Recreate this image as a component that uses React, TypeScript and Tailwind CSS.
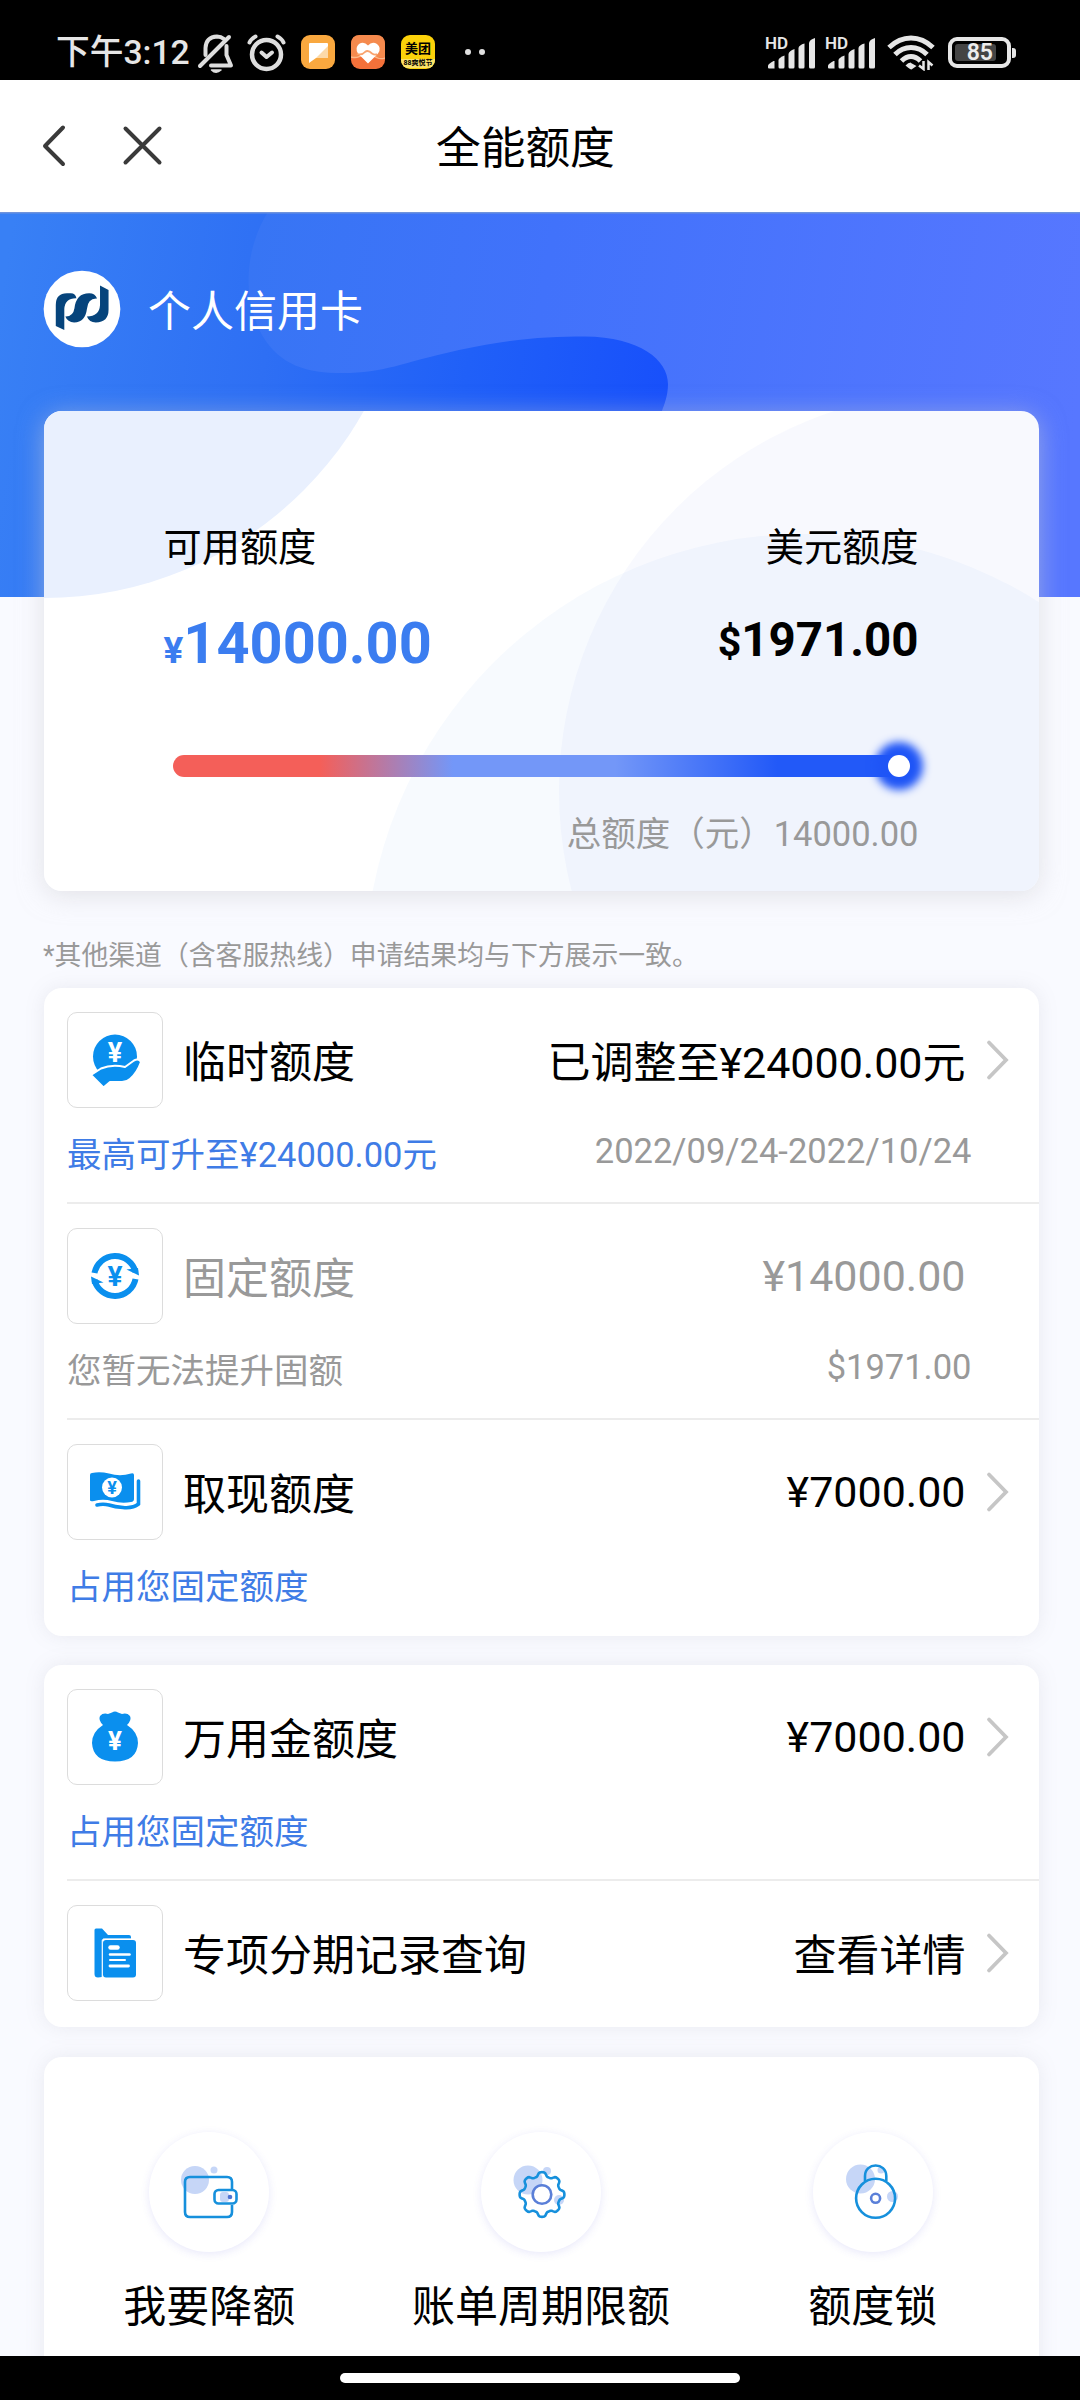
import type { ReactNode } from 'react';

const BLUE = '#0a8fee';

function Yuan({ x, y, size, fill }: { x: number; y: number; size: number; fill: string }) {
  return (
    <text x={x} y={y} textAnchor="middle" fontFamily="Roboto, sans-serif" fontWeight={700} fontSize={size} fill={fill}>
      ¥
    </text>
  );
}

/* ---------- status bar ---------- */

function SignalIcon() {
  return (
    <div className="relative h-[34px] w-[52px]">
      <span className="absolute left-0 top-0 text-[17px] font-semibold leading-[14px] text-[#e6e6e6]">HD</span>
      <svg className="absolute inset-0" width="52" height="34" viewBox="0 0 52 34" fill="#e6e6e6">
        <path d="M3 29.500 Q3 28 8.500 25 L9.500 25 V32.500 H4 Q3 32.500 3 31.500 Z" />
        <path d="M13.500 24 Q14 21.500 19.500 19.500 V31 Q19.500 32.500 18 32.500 H15 Q13.500 32.500 13.500 31 Z" />
        <path d="M23.500 18 Q24 15 29.500 13 V31 Q29.500 32.500 28 32.500 H25 Q23.500 32.500 23.500 31 Z" />
        <path d="M33.500 12 Q34 9 39.500 7.500 V31 Q39.500 32.500 38 32.500 H35 Q33.500 32.500 33.500 31 Z" />
        <path d="M44 7 Q44.500 3.500 50 2 V31 Q50 32.500 48.500 32.500 H45.500 Q44 32.500 44 31 Z" />
      </svg>
    </div>
  );
}

function StatusBar() {
  return (
    <div className="flex h-[80px] shrink-0 items-start bg-black pl-[56px] text-[#e6e6e6]">
      <span className="mt-[33px] w-[135px] whitespace-nowrap text-[33.700px] font-medium leading-[40px]">下午3:12</span>
      <svg className="ml-[6px] mt-[32px]" width="38" height="42" viewBox="0 0 38 42" fill="none" stroke="#dedede" strokeWidth="4" strokeLinecap="round" strokeLinejoin="round">
        <path d="M8.500 23 V16 Q9 5 20 4.500 Q24 4.500 27 7" />
        <path d="M29.500 14 V23 L34 33.500 H14" />
        <path d="M3 34 L32 5" />
        <path d="M14.500 38 Q19 42.500 24 38 Z" fill="#dedede" strokeWidth="1.500" />
      </svg>
      <svg className="ml-[11px] mt-[32px]" width="42" height="42" viewBox="0 0 42 42" fill="none" stroke="#dedede" strokeWidth="4" strokeLinecap="round">
        <circle cx="20.500" cy="22.500" r="14.500" strokeWidth="4.500" />
        <path d="M15.500 20.500 L20.500 25 L26 20.500" strokeLinejoin="round" />
        <path d="M3.500 10.500 Q5 7 9.500 4.500 M37.500 10.500 Q36 7 31.500 4.500" />
      </svg>
      <svg className="ml-[13px] mt-[35px]" width="34" height="34" viewBox="0 0 34 34">
        <rect width="34" height="34" rx="9" fill="#f9a83f" />
        <path d="M8 9 Q8 8 9 8 H26 Q27 8 27 9 V23 H15 L8 28 Z" fill="#fff" />
        <path d="M27 11 V23 H15 Z" fill="#fcd9a8" />
      </svg>
      <svg className="ml-[16px] mt-[35px]" width="34" height="34" viewBox="0 0 34 34">
        <rect width="34" height="34" rx="9" fill="#f4713a" />
        <path d="M0 22 H34 V9 Q34 0 25 0 H9 Q0 0 0 9 Z" fill="#f58a4e" />
        <path d="M0 22 Q7 24 12 19 Q17 15 22 20 Q27 25 34 23" stroke="#fbb98a" strokeWidth="1.500" fill="none" />
        <path d="M17 28.500 L7 18.500 Q3.500 13 8 9 Q13 6 17 10.500 Q21 6 26 9 Q31 13 27 18.500 Z" fill="#fff" />
        <path d="M6 19 Q11 20.500 14 17 Q17 14.500 21 18.500 Q24 20.500 26 19" stroke="#f9a36e" strokeWidth="1.800" fill="none" />
      </svg>
      <div className="ml-[16px] mt-[35px] flex h-[34px] w-[34px] flex-col items-center overflow-hidden rounded-[9px] bg-[#fcd20a] text-black">
        <span className="mt-[7px] text-[13px] font-bold leading-[14px]">美团</span>
        <span className="mt-[3px] w-full whitespace-nowrap bg-[#fbe36a] text-center text-[7px] font-bold leading-[9px]">88爽悦节</span>
      </div>
      <div className="ml-[30px] mt-[49px] flex gap-[8px]">
        <span className="h-[6px] w-[6px] rounded-full bg-[#e0e0e0]" />
        <span className="h-[6px] w-[6px] rounded-full bg-[#e0e0e0]" />
      </div>
      <div className="ml-[280px] mt-[36px] flex gap-[8px]">
        <SignalIcon />
        <SignalIcon />
      </div>
      <svg className="ml-[10px] mt-[35px]" width="48" height="36" viewBox="0 0 48 36" fill="none" stroke="#e6e6e6" strokeWidth="5">
        <path d="M2 12.500 Q12 3 24 3 Q36 3 46 12.500" />
        <path d="M8 19.500 Q15 12.500 24 12.500 Q33 12.500 40 19.500" />
        <path d="M14.500 26 Q19 21.500 24 21.500 Q29 21.500 33.500 26" />
        <path d="M24 28 L29.500 31 L24.500 34.500 Q23 34.500 18.500 30.500 Q21 27.500 24 27.500 Z" fill="#e6e6e6" stroke="none" />
        <path d="M36.500 26 V34 L32 30.500 M41.500 35 V27 L45.500 30.500" strokeWidth="2.500" />
      </svg>
      <div className="ml-[13px] mt-[37px] flex items-center">
        <div className="flex h-[31px] w-[63px] rounded-[9px] border-[4px] border-[#e6e6e6] p-[3px]">
          <div className="flex h-full w-[41px] items-center justify-end rounded-[3px] bg-[#444444] pr-[3px] text-[23px] font-semibold leading-none text-[#ececec]">85</div>
        </div>
        <span className="ml-[1px] h-[10px] w-[4px] rounded-r-[3px] bg-[#e6e6e6]" />
      </div>
    </div>
  );
}

function Header() {
  return (
    <div className="flex h-[132px] shrink-0 bg-white">
      <svg className="ml-[36px] mt-[40px]" width="36" height="52" viewBox="0 0 36 52" fill="none" stroke="#3a3a3a" strokeWidth="4" strokeLinecap="round" strokeLinejoin="round">
        <path d="M27 7.500 L9 26 L27 44" />
      </svg>
      <svg className="ml-[46px] mt-[40px]" width="48" height="52" viewBox="0 0 48 52" fill="none" stroke="#3a3a3a" strokeWidth="4" strokeLinecap="round">
        <path d="M7.500 8.500 L41.500 42.500 M41.500 8.500 L7.500 42.500" />
      </svg>
      <h1 className="ml-[270px] mt-[44px] text-[44.700px] font-normal leading-[50px] text-black">全能额度</h1>
    </div>
  );
}

/* ---------- hero ---------- */

function HeroBackground() {
  return (
    <svg className="absolute left-0 top-0" width="1080" height="385" viewBox="0 212 1080 385">
      <defs>
        <linearGradient id="deep" gradientUnits="userSpaceOnUse" x1="0" y1="300" x2="668" y2="400">
          <stop offset="0" stopColor="#3880f5" />
          <stop offset="0.400" stopColor="#2e6ff4" />
          <stop offset="0.700" stopColor="#2060f8" />
          <stop offset="1" stopColor="#1850fb" />
        </linearGradient>
        <linearGradient id="light" gradientUnits="userSpaceOnUse" x1="250" y1="260" x2="1080" y2="400">
          <stop offset="0" stopColor="#3775f4" />
          <stop offset="0.350" stopColor="#4172fb" />
          <stop offset="1" stopColor="#5777ff" />
        </linearGradient>
      </defs>
      <rect y="212" width="1080" height="385" fill="url(#deep)" />
      <path
        d="M268 212 C250 240 238 290 262 335 C280 366 308 373 342 373 C385 373 400 363 459 350 C510 339 545 336.500 585 336.500 C640 337 668 360 668 384 C668 396 664 405 662 411 L640 597 H1080 V212 Z"
        fill="url(#light)"
      />
      <rect y="212" width="1080" height="1.500" fill="#6f93dc" />
    </svg>
  );
}

function BankLogo() {
  return (
    <svg width="78" height="78" viewBox="7 7 238 238">
      <circle cx="126" cy="126" r="117" fill="#fff" />
      <g fill="#06447c">
        <path d="M46 178 V114 Q46 78 80 78 H92 Q106 78 109 93 Q74 92 72 126 V190 Z" />
        <path d="M75 149 Q99 150 103 124 Q108 78 148 78 Q166 78 172 94 Q144 92 141 126 Q136 166 102 167 Q82 166 75 149 Z" />
        <path d="M207 68 L181 54 V114 Q179 149 141 149 Q148 167 168 167 Q207 166 207 128 Z" />
      </g>
    </svg>
  );
}

function LimitCard() {
  return (
    <div className="relative h-[480px] overflow-hidden rounded-[18px] bg-white">
      <svg className="absolute inset-0" width="995" height="480" viewBox="0 0 995 480">
        <circle cx="0" cy="-180" r="367" fill="#e9f0fe" />
        <circle cx="915" cy="380" r="400" fill="#3060e0" fillOpacity="0.035" />
        <circle cx="760" cy="562" r="439" fill="#2468f0" fillOpacity="0.035" />
      </svg>
      <div className="relative pl-[120px] pr-[120px] pt-[114px] text-black">
        <div className="flex justify-between text-[38.200px] leading-[46px]">
          <span>可用额度</span>
          <span>美元额度</span>
        </div>
        <div className="mt-[40px] flex h-[64px] justify-between whitespace-nowrap font-bold">
          <span className="text-[57.700px] leading-[64px] text-[#3b7df0]">
            <span className="text-[37px]">¥</span>14000.00
          </span>
          <span className="-mt-[3px] text-[47.500px] leading-[64px]">
            <span className="text-[41px]">$</span>1971.00
          </span>
        </div>
        <div className="ml-[9px] mt-[80px] flex h-[22px] w-[737px] items-center justify-end rounded-full bg-[linear-gradient(90deg,#f45f59_0%,#f45f59_20%,#7397f8_38%,#7397f8_60%,#2259f8_82%,#2259f8_100%)]">
          <span className="h-[22px] w-[22px] rounded-full bg-white shadow-[0_0_9px_13px_#1f55f6]" />
        </div>
        <div className="mt-[35px] text-right text-[34.500px] leading-[44px] text-[#999999]">总额度（元）14000.00</div>
      </div>
    </div>
  );
}

function Hero() {
  return (
    <section className="relative pl-[43.500px] pr-[41.500px]">
      <HeroBackground />
      <div className="relative -ml-[0.500px] flex items-start pt-[58px]">
        <BankLogo />
        <span className="ml-[27px] mt-[17px] text-[43px] leading-[50px] text-white">个人信用卡</span>
      </div>
      <div className="relative mt-[63px] rounded-[18px] shadow-[0_4px_26px_rgba(205,205,210,0.55)]">
        <LimitCard />
      </div>
    </section>
  );
}

/* ---------- row icons ---------- */

function HandCoinIcon() {
  return (
    <svg width="94" height="94" viewBox="1 1 94 94">
      <circle cx="48" cy="44.500" r="22" fill={BLUE} />
      <Yuan x={48} y={49.500} size={27} fill="#fff" />
      <path d="M24 63 L34 56.500 Q45 52 58 55 L67 48.500 Q72 46 74 50 Q70 61 63 67 Q60 70 55 70 H43 L36.500 75.500 Z" fill={BLUE} stroke="#fff" strokeWidth="2" strokeLinejoin="round" />
    </svg>
  );
}

function CycleYuanIcon() {
  return (
    <svg width="94" height="94" viewBox="1 1 94 94">
      <path d="M27.500 45 A21 21 0 0 1 68.500 44" fill="none" stroke={BLUE} strokeWidth="6" />
      <path d="M68.500 51 A21 21 0 0 1 27.500 52" fill="none" stroke={BLUE} strokeWidth="6" />
      <path d="M59.500 41.500 L71 40 L72 47.500 Z" fill={BLUE} />
      <path d="M36.500 54.500 L25 56 L24 48.500 Z" fill={BLUE} />
      <Yuan x={48} y={58} size={28} fill={BLUE} />
    </svg>
  );
}

function BanknoteIcon() {
  return (
    <svg width="94" height="94" viewBox="1 1 94 94">
      <path d="M23 31 Q23 29 25 29 Q33 27.500 42 29.500 Q53 33 64 29.500 Q67 28.500 67 31 V55 Q67 57.500 64 58 Q55 60 45 57 Q36 54.500 27 57 Q23 58 23 56 Z" fill={BLUE} />
      <path d="M71.500 37 V60 Q66 64.500 56 63.500 Q48 63 42 61 Q36 59.500 30 61" fill="none" stroke={BLUE} strokeWidth="3.600" strokeLinecap="round" />
      <circle cx="45" cy="43.500" r="10" fill="#fff" />
      <Yuan x={45} y={50} size={18} fill={BLUE} />
    </svg>
  );
}

function MoneyBagIcon() {
  return (
    <svg width="94" height="94" viewBox="1 1 94 94">
      <path d="M36 36 Q31 31 33 27 Q36 23.500 41 25 Q43 24 45 23.500 Q48 21.500 51 23.500 Q53 24 55 25 Q60 23.500 63 27 Q65 31 60 36 Q71 43 71 54 Q70 72.500 48 72.500 Q26 72.500 25 54 Q25 43 36 36 Z" fill={BLUE} />
      <Yuan x={48} y={61} size={26} fill="#fff" />
    </svg>
  );
}

function RecordIcon() {
  return (
    <svg width="94" height="94" viewBox="1 1 94 94">
      <path d="M27.500 25 Q27.500 23.500 29 23.500 H35 L41 30 H62 Q64 30 64 32 V33.500 H36 V70 Q36 72.500 31 72.500 Q27.500 72.500 27.500 69 Z" fill={BLUE} />
      <rect x="36" y="35" width="33" height="37.500" rx="3" fill={BLUE} />
      <path d="M35.300 72 V35.500 Q35.300 34.300 38 34.300 H64" fill="none" stroke="#fff" strokeWidth="1.200" />
      <g stroke="#fff" strokeLinecap="round">
        <path d="M43.500 42.500 H50.500" strokeWidth="4.500" />
        <path d="M43 49.500 H62.500" strokeWidth="2.500" />
        <path d="M43 55 H58" strokeWidth="2" />
        <path d="M43 61 H61.500" strokeWidth="2.800" />
      </g>
    </svg>
  );
}

/* ---------- rows ---------- */

function Chevron() {
  return (
    <svg width="24" height="42" viewBox="0 0 24 42" fill="none" stroke="#c6c6c6" strokeWidth="3.800" strokeLinecap="round" strokeLinejoin="miter">
      <path d="M4 3.500 L21 21 L4 38.500" />
    </svg>
  );
}

interface RowProps {
  icon: ReactNode;
  title: string;
  value: string;
  note?: string;
  noteValue?: string;
  muted?: boolean;
  cjkValue?: boolean;
  divider?: boolean;
}

function LimitRow({ icon, title, value, note, noteValue, muted, cjkValue, divider = true }: RowProps) {
  return (
    <div className={note ? 'flex h-[216px] flex-col' : 'flex h-[146px] flex-col'}>
      <div className={muted ? 'mt-[24px] flex h-[96px] items-center text-[43px] leading-[50px] text-[#999999]' : 'mt-[24px] flex h-[96px] items-center text-[43px] leading-[50px] text-black'}>
        <div className="flex h-[96px] w-[96px] items-center justify-center rounded-[10px] border border-[#dcdcdc]">{icon}</div>
        <span className="ml-[20px] pt-[6px]">{title}</span>
        <span className={cjkValue ? 'ml-auto pt-[6px]' : 'ml-auto'}>{value}</span>
        <div className="ml-[19px] mr-[27px] w-[27px]">{!muted && <Chevron />}</div>
      </div>
      {note && (
        <div className="flex items-start justify-between pr-[67px] text-[34.500px] leading-[40px]">
          <span className={muted ? 'mt-[27px] text-[#999999]' : 'mt-[27px] text-[#3f7ce6]'}>{note}</span>
          <span className="mt-[23px] text-[#999999]">{noteValue}</span>
        </div>
      )}
      {divider && <div className="mt-auto h-[2px] bg-[#ececec]" />}
    </div>
  );
}

function Card({ children }: { children: ReactNode }) {
  return <div className="rounded-[18px] bg-white pl-[23.500px] shadow-[0_0_20px_rgba(120,120,140,0.13)]">{children}</div>;
}

/* ---------- shortcuts ---------- */

const gearPath = Array.from({ length: 128 }, (_, i) => {
  const a = (i / 128) * Math.PI * 2;
  const r = 20.3 + 2.2 * Math.tanh(1.8 * Math.cos(8 * a));
  return `${i ? 'L' : 'M'}${(1 + r * Math.sin(a)).toFixed(2)} ${(2.5 - r * Math.cos(a)).toFixed(2)}`;
}).join(' ') + 'Z';

function WalletDrawing() {
  return (
    <>
      <g fill="#c6d6f7" stroke="none">
        <circle cx="-14" cy="-12" r="14" />
        <circle cx="5" cy="-22" r="3.500" />
        <rect x="11" y="0" width="9" height="10" rx="3" />
      </g>
      <path d="M23 -3 V-10 Q23 -15 18 -15 H-19 Q-24 -15 -24 -10 V20 Q-24 25 -19 25 H18 Q23 25 23 20 V13" />
      <rect x="5.500" y="-2" width="22" height="13.500" rx="4" />
      <circle cx="21" cy="5" r="2.300" fill="#4f74d2" stroke="none" />
    </>
  );
}

function GearDrawing() {
  return (
    <>
      <g fill="#c6d6f7" stroke="none">
        <circle cx="-13" cy="-12" r="14.500" />
        <circle cx="6" cy="-21" r="4" />
        <circle cx="18" cy="8" r="5" />
      </g>
      <path d={gearPath} />
      <circle cx="1" cy="2.500" r="9.300" stroke="#5a7fd8" fill="#fff" />
    </>
  );
}

function LockDrawing() {
  return (
    <>
      <g fill="#c6d6f7" stroke="none">
        <circle cx="-12.500" cy="-13" r="14.500" />
        <circle cx="19.500" cy="4.500" r="5.500" />
        <circle cx="8" cy="-22" r="3.500" />
      </g>
      <path d="M-8 -11 V-16 C-8 -30 13.300 -30 13.300 -16 V-11" />
      <circle cx="2.600" cy="6.300" r="19.500" />
      <circle cx="2.600" cy="6.300" r="4.500" stroke="#5a7fd8" />
    </>
  );
}

function Shortcut({ label, children }: { label: string; children: ReactNode }) {
  return (
    <div className="flex flex-1 flex-col items-center">
      <div className="flex h-[120px] w-[120px] items-center justify-center rounded-full bg-white shadow-[0_2px_9px_rgba(80,80,220,0.13)]">
        <svg width="80" height="80" viewBox="-40 -40 80 80" fill="none">
          <g stroke="#1690dc" strokeWidth="2.600">{children}</g>
        </svg>
      </div>
      <span className="mt-[30px] whitespace-nowrap text-[43px] leading-[50px] text-black">{label}</span>
    </div>
  );
}

export default function App() {
  return (
    <div className="flex h-[2400px] w-[1080px] flex-col overflow-hidden bg-[#f9faff] font-[Roboto,'Noto_Sans_CJK_SC',sans-serif]">
      <StatusBar />
      <Header />
      <main className="flex min-h-0 flex-1 flex-col overflow-hidden">
        <Hero />
        <p className="mt-[45px] pl-[43px] text-[26.850px] leading-[40px] text-[#999999]">*其他渠道（含客服热线）申请结果均与下方展示一致。</p>
        <div className="mt-[12px] flex flex-col pl-[43.500px] pr-[41.500px]">
          <Card>
            <LimitRow icon={<HandCoinIcon />} title="临时额度" value="已调整至¥24000.00元" cjkValue note="最高可升至¥24000.00元" noteValue="2022/09/24-2022/10/24" />
            <LimitRow icon={<CycleYuanIcon />} title="固定额度" value="¥14000.00" muted note="您暂无法提升固额" noteValue="$1971.00" />
            <LimitRow icon={<BanknoteIcon />} title="取现额度" value="¥7000.00" note="占用您固定额度" divider={false} />
          </Card>
          <div className="h-[29px]" />
          <Card>
            <LimitRow icon={<MoneyBagIcon />} title="万用金额度" value="¥7000.00" note="占用您固定额度" />
            <LimitRow icon={<RecordIcon />} title="专项分期记录查询" value="查看详情" cjkValue divider={false} />
          </Card>
          <div className="mt-[30px] flex h-[340px] rounded-[18px] bg-white pt-[75px] shadow-[0_0_20px_rgba(120,120,140,0.13)]">
            <Shortcut label="我要降额">
              <WalletDrawing />
            </Shortcut>
            <Shortcut label="账单周期限额">
              <GearDrawing />
            </Shortcut>
            <Shortcut label="额度锁">
              <LockDrawing />
            </Shortcut>
          </div>
        </div>
      </main>
      <div className="flex h-[44px] shrink-0 justify-center bg-black pt-[17px]">
        <div className="h-[10px] w-[400px] rounded-full bg-white" />
      </div>
    </div>
  );
}
